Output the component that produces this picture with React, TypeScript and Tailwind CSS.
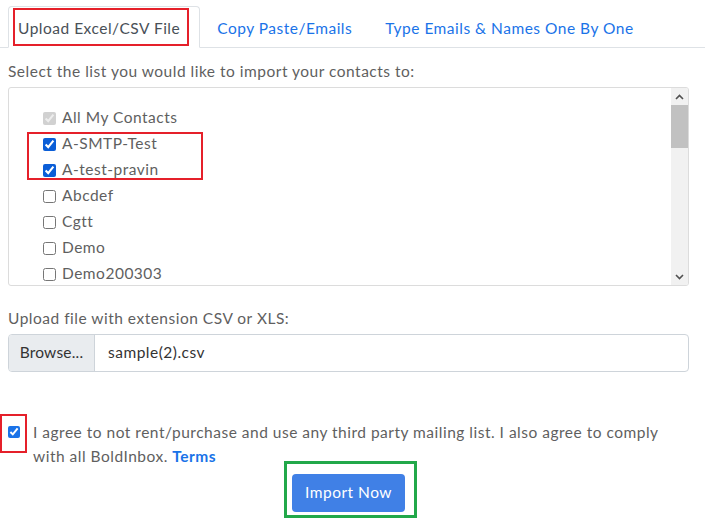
import { useState } from 'react';

const lists = [
  { name: 'All My Contacts', checked: true, disabled: true },
  { name: 'A-SMTP-Test', checked: true },
  { name: 'A-test-pravin', checked: true },
  { name: 'Abcdef', checked: false },
  { name: 'Cgtt', checked: false },
  { name: 'Demo', checked: false },
  { name: 'Demo200303', checked: false },
  { name: 'Newsletter', checked: false },
  { name: 'Prospects', checked: false },
];

export default function App() {
  const [agree, setAgree] = useState(true);

  return (
    <div className="relative w-[705px] h-[518px] overflow-hidden bg-white text-[15.5px] tracking-[0.5px] text-[#5f5f5f]" style={{ fontFamily: 'Lato, "Noto Sans", sans-serif' }}>
      {/* tabs */}
      <div className="flex pt-[6px] pl-[8px] border-b border-[#dee2e6]">
        <div className="relative -mb-px h-[42px] pl-[9px] pr-[19px] pt-[4px] flex items-center border border-[#dee2e6] border-b-white rounded-t-[4px] bg-white text-[#495057]">
          Upload Excel/CSV File
          <div className="absolute left-[4px] right-[10px] top-[1px] bottom-[1px] border-2 border-[#e5202a]" />
        </div>
        <div className="h-[41px] pl-[17px] pr-[16px] pt-[4px] flex items-center text-[#1a73e8]">Copy Paste/Emails</div>
        <div className="h-[41px] px-[17px] pt-[4px] flex items-center text-[#1a73e8]">Type Emails &amp; Names One By One</div>
      </div>

      <div className="px-[8px]">
        <div className="mt-[11px] leading-[24px]">Select the list you would like to import your contacts to:</div>

        <div className="relative mt-[4px] flex w-[681px] h-[199px] border border-[#dcdcdc] rounded-[3px] overflow-hidden">
          <div className="flex-1 pt-[17px] pl-[34px]">
            {lists.map(l => (
              <label key={l.name} className="flex items-center h-[26px] gap-[6px]">
                <input
                  type="checkbox"
                  defaultChecked={l.checked}
                  disabled={l.disabled}
                  className="w-[13px] h-[13px] m-0 accent-[#0b5ed7]"
                />
                <span>{l.name}</span>
              </label>
            ))}
          </div>
          {/* scrollbar */}
          <div className="w-[17px] flex flex-col bg-[#f1f1f1]">
            <div className="h-[17px] flex items-center justify-center">
              <svg width="9" height="6" viewBox="0 0 9 6"><path d="M1 5 L4.5 1.5 L8 5" stroke="#505050" strokeWidth="1.6" fill="none" /></svg>
            </div>
            <div className="h-[43px] bg-[#c1c1c1]" />
            <div className="flex-1" />
            <div className="h-[17px] flex items-center justify-center">
              <svg width="9" height="6" viewBox="0 0 9 6"><path d="M1 1 L4.5 4.5 L8 1" stroke="#505050" strokeWidth="1.6" fill="none" /></svg>
            </div>
          </div>
          <div className="absolute left-[18px] top-[44px] w-[176px] h-[48px] border-2 border-[#e5202a]" />
        </div>

        <div className="mt-[20px] leading-[24px]">Upload file with extension CSV or XLS:</div>
        <div className="mt-[4px] flex w-[681px] h-[38px] border border-[#ced4da] rounded-[4px] overflow-hidden">
          <div className="w-[86px] flex items-center justify-center bg-[#e9ecef] border-r border-[#ced4da] text-[#333] tracking-[0.2px]">Browse...</div>
          <div className="flex items-center pl-[13px] text-[#333]">sample(2).csv</div>
        </div>
      </div>

      <div className="relative mt-[48px] flex pl-[8px] pr-[30px]">
        <input
          type="checkbox"
          checked={agree}
          onChange={e => setAgree(e.target.checked)}
          className="mt-[6px] w-[12px] h-[12px] m-0 shrink-0 accent-[#1a73e8]"
        />
        <p className="ml-[13px] leading-[24px]">
          I agree to not rent/purchase and use any third party mailing list. I also agree to comply with all BoldInbox.{' '}
          <span className="font-bold text-[#1a73e8]">Terms</span>
        </p>
        <div className="absolute left-[0px] top-[-6px] w-[27px] h-[39px] border-2 border-[#e5202a]" />
      </div>

      <div className="relative mt-[6px] flex justify-center pr-[8px]">
        <button className="h-[38px] px-[13px] rounded-[4px] bg-[#4080e6] text-white">Import Now</button>
        <div className="absolute left-[284px] top-[-13px] w-[133px] h-[57px] border-[3px] border-[#22a84a]" />
      </div>
    </div>
  );
}
